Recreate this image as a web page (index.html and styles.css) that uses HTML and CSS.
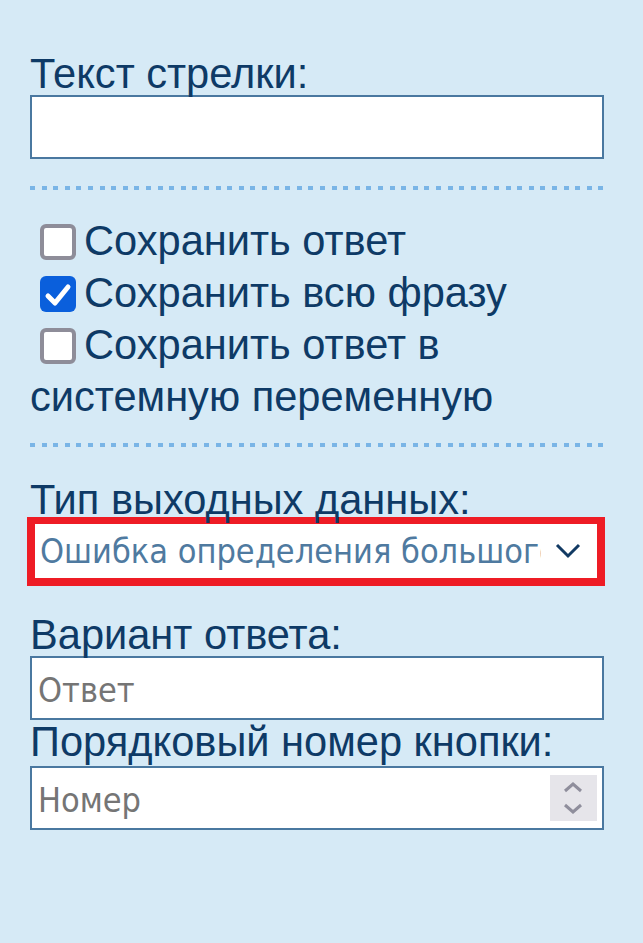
FILE: index.html
```html
<!DOCTYPE html>
<html lang="ru">
<head>
<meta charset="utf-8">
<title>Настройки</title>
<link rel="stylesheet" href="styles.css">
</head>
<body>
<div class="panel">
  <section class="block">
    <div class="label">Текст стрелки:</div>
    <div class="input"></div>
  </section>

  <div class="divider"></div>

  <section class="checks">
    <div class="check-row"><span class="box"></span>Сохранить ответ</div>
    <div class="check-row"><span class="box checked"><svg viewBox="0 0 36 36" width="36" height="36"><polyline points="8,20 15,27 28,11" fill="none" stroke="#fff" stroke-width="5" stroke-linecap="round" stroke-linejoin="round"/></svg></span>Сохранить всю фразу</div>
    <div class="check-row"><span class="box"></span>Сохранить ответ в системную переменную</div>
  </section>

  <div class="divider second"></div>

  <section class="block">
    <div class="label">Тип выходных данных:</div>
    <div class="select">
      <span class="select-text">Ошибка определения большого значения</span>
      <svg class="chev" viewBox="0 0 26 16" width="26" height="16"><polyline points="2,2 13,13 24,2" fill="none" stroke="#123a63" stroke-width="3"/></svg>
    </div>
  </section>

  <section class="block spaced">
    <div class="label">Вариант ответа:</div>
    <div class="input"><span class="ph">Ответ</span></div>
    <div class="label">Порядковый номер кнопки:</div>
    <div class="input number">
      <span class="ph">Номер</span>
      <span class="spin">
        <svg viewBox="0 0 47 46" width="47" height="46"><polyline points="15,16 23,9 31,16" fill="none" stroke="#8f8e9c" stroke-width="3"/><polyline points="15,30 23,37 31,30" fill="none" stroke="#8f8e9c" stroke-width="3"/></svg>
      </span>
    </div>
  </section>
</div>
</body>
</html>
```

FILE: styles.css
```css
html, body {
  margin: 0;
  padding: 0;
  background: #d6eaf6;
}
body {
  font-family: "Liberation Sans", Arial, sans-serif;
  color: #0e3a66;
}
.panel {
  width: 574px;
  padding: 52px 0 40px 30px;
}
.label {
  font-size: 41.6px;
  line-height: 43px;
  white-space: nowrap;
}
.input {
  box-sizing: border-box;
  height: 64px;
  border: 2px solid #4a78a0;
  background: #fff;
  display: flex;
  align-items: center;
  padding-left: 6px;
}
.ph {
  font-size: 34px;
  color: #757575;
  font-family: "DejaVu Sans Condensed", "Liberation Sans", sans-serif;
  margin-top: 3px;
}
.divider {
  height: 4px;
  margin: 27px 0 25px;
  background: repeating-linear-gradient(90deg, #7ab5e6 0 5px, transparent 5px 11.6px);
}
.divider.second {
  margin: 20px 0 31px;
}
.checks {
  font-size: 41.6px;
  line-height: 52px;
}
.check-row {
  display: block;
}
.box {
  display: inline-block;
  box-sizing: border-box;
  width: 36px;
  height: 36px;
  margin: 0 8px 0 10px;
  vertical-align: -5px;
  border: 4px solid #8e8d99;
  border-radius: 6px;
  background: #fff;
}
.box.checked {
  border: none;
  background: #0a5fdc;
}
.box svg {
  display: block;
}
.select {
  box-sizing: border-box;
  height: 69px;
  margin: -4px -1px 0 -3px;
  border: 8px solid #ee1c25;
  border-top-width: 7px;
  background: #fff;
  display: flex;
  align-items: center;
  padding: 0 16px 0 5px;
}
.select-text {
  flex: 1;
  overflow: hidden;
  white-space: nowrap;
  font-size: 34px;
  color: #4f7aa0;
  font-family: "DejaVu Sans Condensed", "Liberation Sans", sans-serif;
}
.chev {
  margin-left: 14px;
}
.spaced {
  margin-top: 27px;
}
.number {
  margin-top: 3px;
  justify-content: space-between;
  padding-right: 5px;
}
.spin {
  width: 47px;
  height: 46px;
  background: #e6e5ea;
}
.spin svg {
  display: block;
}
```
